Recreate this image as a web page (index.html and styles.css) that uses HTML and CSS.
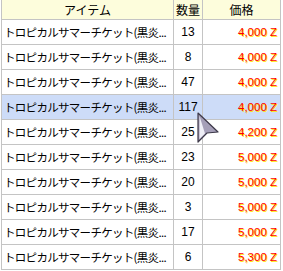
FILE: index.html
```html
<!DOCTYPE html>
<html lang="ja">
<head>
<meta charset="utf-8">
<link rel="stylesheet" href="styles.css">
</head>
<body>
<div class="frame">
  <table class="grid">
    <colgroup><col class="c-item"><col class="c-qty"><col class="c-price"></colgroup>
    <thead>
      <tr><th>アイテム</th><th>数量</th><th>価格</th></tr>
    </thead>
    <tbody>
      <tr><td class="item">トロピカルサマーチケット(黒炎...</td><td class="qty">13</td><td class="price">4,000 Z</td></tr>
      <tr><td class="item">トロピカルサマーチケット(黒炎...</td><td class="qty">8</td><td class="price">4,000 Z</td></tr>
      <tr><td class="item">トロピカルサマーチケット(黒炎...</td><td class="qty">47</td><td class="price">4,000 Z</td></tr>
      <tr class="sel"><td class="item">トロピカルサマーチケット(黒炎...</td><td class="qty">117</td><td class="price">4,000 Z</td></tr>
      <tr><td class="item">トロピカルサマーチケット(黒炎...</td><td class="qty">25</td><td class="price">4,200 Z</td></tr>
      <tr><td class="item">トロピカルサマーチケット(黒炎...</td><td class="qty">23</td><td class="price">5,000 Z</td></tr>
      <tr><td class="item">トロピカルサマーチケット(黒炎...</td><td class="qty">20</td><td class="price">5,000 Z</td></tr>
      <tr><td class="item">トロピカルサマーチケット(黒炎...</td><td class="qty">3</td><td class="price">5,000 Z</td></tr>
      <tr><td class="item">トロピカルサマーチケット(黒炎...</td><td class="qty">17</td><td class="price">5,000 Z</td></tr>
      <tr><td class="item">トロピカルサマーチケット(黒炎...</td><td class="qty">6</td><td class="price">5,300 Z</td></tr>
    </tbody>
  </table>
  <svg class="cursor" width="24" height="32" viewBox="0 0 24 32">
    <path d="M1 1 L21 20 L10 21 L1 30 Z" fill="#a59fb8" stroke="#3c3848" stroke-width="1.2" stroke-linejoin="round"/>
    <path d="M2.5 4 L2.5 27 L8 21.5 Z" fill="#eeeef6"/>
  </svg>
</div>
</body>
</html>
```
FILE: styles.css
```css
html, body {
  margin: 0;
  padding: 0;
  background: #ffffff;
}
.frame {
  position: relative;
  width: 283px;
  height: 271px;
  overflow: hidden;
  padding-left: 1px;
  box-sizing: border-box;
}
.grid {
  border-collapse: collapse;
  table-layout: fixed;
  width: 279px;
  font-family: "Noto Sans CJK JP", "Liberation Sans", sans-serif;
  font-size: 11px;
  color: #000;
}
.c-item { width: 172px; }
.c-qty { width: 29px; }
.c-price { width: 78px; }
.grid th {
  height: 19px;
  padding: 0;
  background: #fdfddc;
  font-weight: normal;
  font-size: 12px;
  text-align: center;
  border-left: 1px solid #c4c4c4;
  border-right: 1px solid #c4c4c4;
  border-bottom: 1px solid #c4c4c4;
  line-height: 19px;
}
.grid td {
  height: 24px;
  padding: 0;
  border: 1px solid #c4c4c4;
  white-space: nowrap;
  overflow: hidden;
  line-height: 24px;
}
.grid td.item {
  padding-left: 2px;
  font-size: 11.5px;
  letter-spacing: -0.7px;
}
.grid td.qty {
  text-align: center;
  font-family: "Liberation Sans", sans-serif;
  font-size: 12px;
}
.grid td.price {
  text-align: right;
  padding-right: 3px;
  font-family: "Liberation Sans", sans-serif;
  font-size: 11.5px;
  color: #ff0000;
  text-shadow: 1px 1px 0 #ffe600;
}
.grid tr.sel td {
  background: #cddcf8;
}
.cursor {
  position: absolute;
  left: 197px;
  top: 112px;
}
```
